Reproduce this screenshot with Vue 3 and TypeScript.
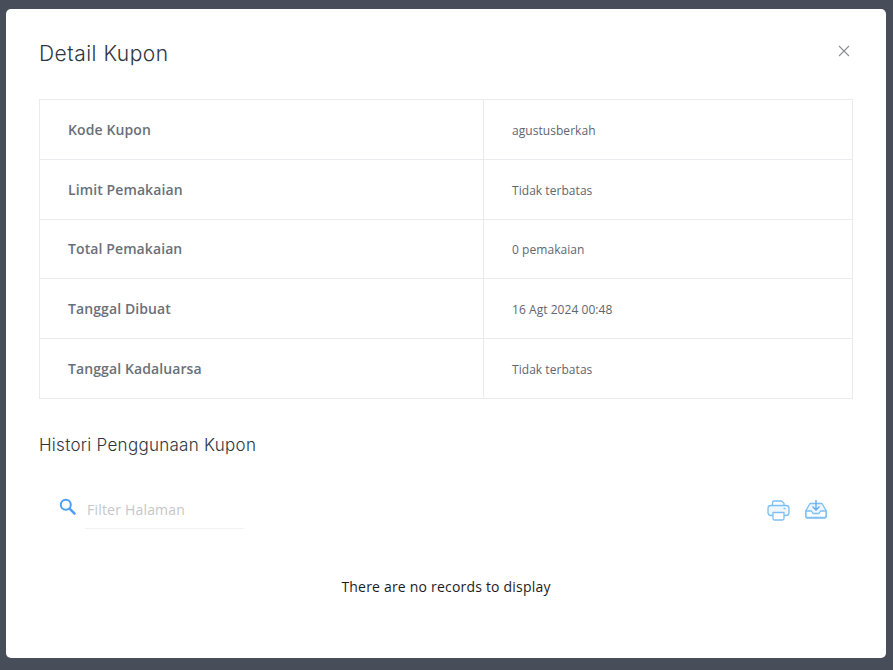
<script setup lang="ts">
const rows: { label: string; value: string }[] = [
  { label: 'Kode Kupon', value: 'agustusberkah' },
  { label: 'Limit Pemakaian', value: 'Tidak terbatas' },
  { label: 'Total Pemakaian', value: '0 pemakaian' },
  { label: 'Tanggal Dibuat', value: '16 Agt 2024 00:48' },
  { label: 'Tanggal Kadaluarsa', value: 'Tidak terbatas' },
]
</script>

<template>
  <div class="backdrop">
    <div class="modal">
      <header class="head">
        <h2 class="title">Detail Kupon</h2>
        <button class="close" type="button" aria-label="Tutup">
          <svg width="12" height="12" viewBox="0 0 12 12" fill="none" stroke="#8a8f96" stroke-width="1.1">
            <path d="M1 1l10 10M11 1L1 11" />
          </svg>
        </button>
      </header>
      <div class="table">
        <div v-for="r in rows" :key="r.label" class="row">
          <div class="label">{{ r.label }}</div>
          <div class="value">{{ r.value }}</div>
        </div>
      </div>
      <h3 class="sub">Histori Penggunaan Kupon</h3>
      <div class="tools">
        <svg class="search" width="17" height="17" viewBox="0 0 17 17" fill="none" stroke="#4a9ff5">
          <circle cx="6.8" cy="6.8" r="5" stroke-width="2" />
          <path d="M10.6 10.6l5 5" stroke-width="2.4" stroke-linecap="round" />
        </svg>
        <div class="filter">Filter Halaman</div>
        <div class="actions">
          <svg width="23" height="21" viewBox="0 0 23 21" fill="none" stroke="#7cc0f5" stroke-width="1.3" stroke-linejoin="round">
            <path d="M5.500 5.500V2.500A1.500 1.500 0 0 1 7 1h7.500l2.500 2.200v2.300" />
            <rect x="1" y="5.500" width="21" height="10" rx="2.800" fill="#eef7fe" />
            <path d="M6 12.500h11v6a1.500 1.500 0 0 1-1.500 1.500h-8A1.500 1.500 0 0 1 6 18.500z" fill="#fff" />
            <path d="M16.500 8.500h2" />
          </svg>
          <svg width="22" height="19" viewBox="0 0 22 19" fill="none" stroke="#7cc0f5" stroke-width="1.3" stroke-linejoin="round">
            <path d="M5 3.500h12l4.300 7.500v5.500a1.500 1.500 0 0 1-1.500 1.500H2.200a1.500 1.500 0 0 1-1.500-1.500V11z" fill="#eef7fe" />
            <path d="M1 11h5.500l1.500 2.500h6l1.500-2.500H21v5.500a1 1 0 0 1-1 1H2a1 1 0 0 1-1-1z" fill="#fff" />
            <path d="M11 0v10M7.500 6.500L11 10l3.500-3.500" stroke="#5aa9f5" />
          </svg>
        </div>
      </div>
      <p class="empty">There are no records to display</p>
    </div>
  </div>
</template>

<style>
html,
body {
  margin: 0;
  background: #474e59;
}
</style>

<style scoped>
.backdrop {
  box-sizing: border-box;
  width: 893px;
  height: 670px;
  padding: 9px 7px 12px 6px;
  background: #474e59;
  overflow: hidden;
}
.modal {
  box-sizing: border-box;
  height: 649px;
  padding: 0 33px;
  background: #fff;
  border-radius: 5px;
  font-family: "Open Sans", sans-serif;
}
.head {
  display: flex;
  justify-content: space-between;
  align-items: flex-start;
  height: 90px;
}
.title {
  margin: 30px 0 0;
  font-family: "Inter", sans-serif;
  font-size: 21px;
  line-height: 30px;
  font-weight: 300;
  letter-spacing: 0.5px;
  color: #2f3640;
}
.close {
  margin: 36px 3px 0 0;
  padding: 0;
  border: 0;
  background: none;
  line-height: 0;
}
.table {
  border: 1px solid #e9ebee;
}
.row {
  display: grid;
  grid-template-columns: 443px 1fr;
  height: 59.8px;
  border-bottom: 1px solid #e9ebee;
  box-sizing: border-box;
}
.row:last-child {
  height: 58.8px;
  border-bottom: 0;
}
.label {
  display: flex;
  align-items: center;
  padding: 0 0 0.4px 28px;
  font-size: 14px;
  font-weight: 600;
  letter-spacing: 0.1px;
  color: #69707a;
}
.value {
  display: flex;
  align-items: center;
  padding: 2px 0 0 28px;
  border-left: 1px solid #e9ebee;
  font-size: 12px;
  letter-spacing: 0.05px;
  color: #5e6670;
}
.sub {
  margin: 33px 0 0;
  font-family: "Inter", sans-serif;
  font-size: 17px;
  line-height: 26px;
  font-weight: 300;
  letter-spacing: 0.28px;
  color: #2f3640;
}
.tools {
  display: flex;
  align-items: flex-start;
  margin-top: 32px;
  padding-left: 20px;
}
.search {
  margin-top: 8px;
}
.filter {
  box-sizing: border-box;
  width: 159px;
  height: 39px;
  margin-left: 9px;
  padding: 10px 0 0 2px;
  border-bottom: 1px solid #f1f2f4;
  font-size: 14px;
  letter-spacing: 0.2px;
  color: #c5c7ca;
}
.actions {
  display: flex;
  gap: 15px;
  margin-left: auto;
  margin-right: 26.5px;
  margin-top: 10px;
}
.empty {
  margin: 48px 0 0;
  text-align: center;
  font-size: 14px;
  line-height: 20px;
  letter-spacing: 0.2px;
  color: #1c1c1c;
}
</style>
